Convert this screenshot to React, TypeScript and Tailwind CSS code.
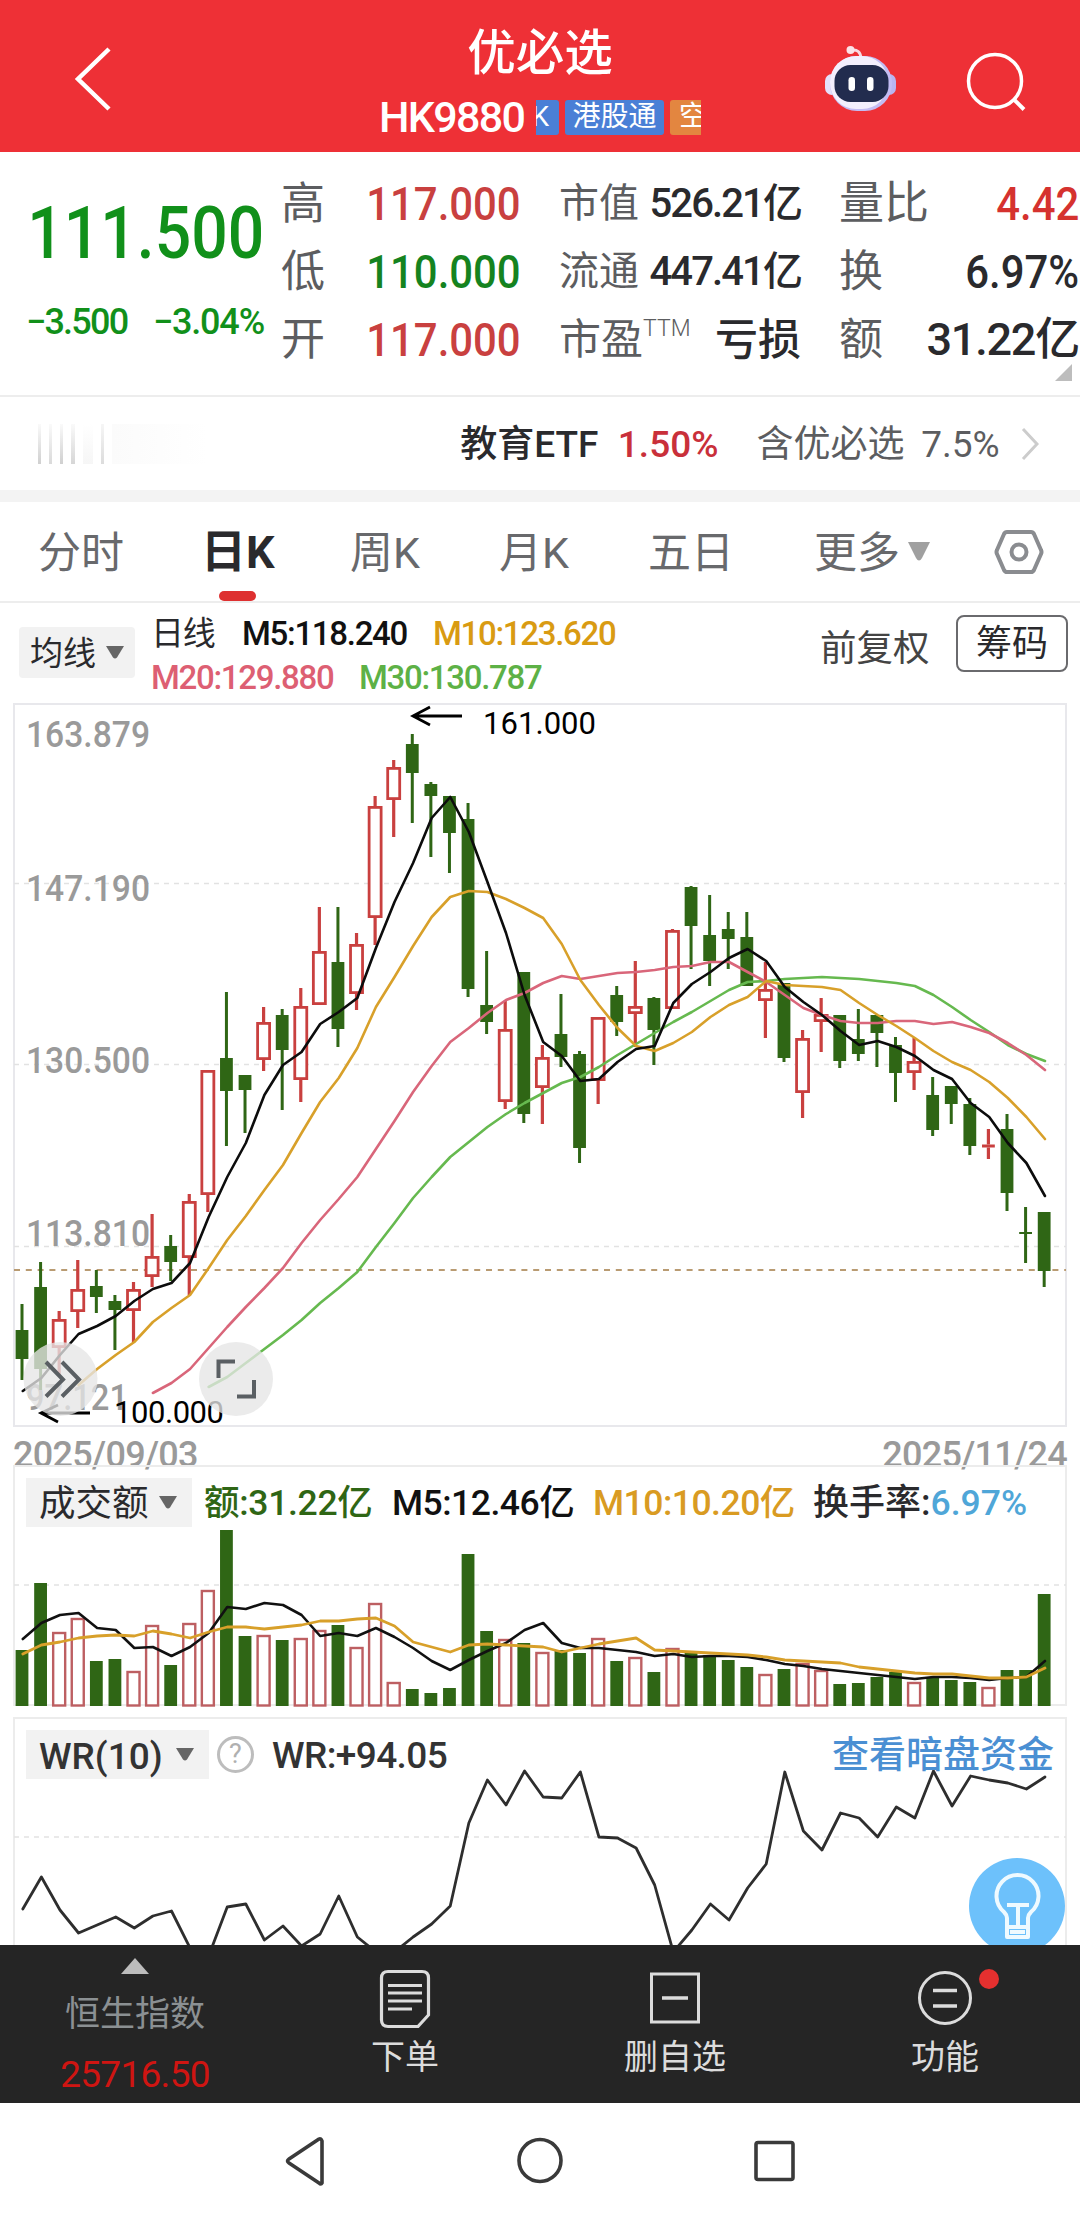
import type { ReactNode } from "react";

type Candle = {
  up: boolean;
  high: number;
  top: number;
  bottom: number;
  low: number;
};

const UP = "#c9403f";
const DOWN = "#2f6615";

const STEP = 18.585;
const FIRST_X = 22;
const xAt = (index: number) => FIRST_X + index * STEP;

// [up, high, body top, body bottom, low]
const candles: Candle[] = (
  [
    [0, 1304, 1330, 1359, 1380],
    [0, 1262, 1287, 1369, 1390],
    [1, 1311, 1319, 1348, 1375],
    [1, 1260, 1289, 1312, 1328],
    [0, 1270, 1286, 1297, 1313],
    [0, 1295, 1301, 1310, 1350],
    [1, 1282, 1289, 1311, 1342],
    [1, 1214, 1256, 1277, 1287],
    [0, 1235, 1246, 1262, 1281],
    [1, 1194, 1201, 1258, 1295],
    [1, 1070, 1070, 1195, 1212],
    [0, 992, 1058, 1091, 1146],
    [0, 1075, 1075, 1090, 1133],
    [1, 1007, 1022, 1060, 1071],
    [0, 1009, 1015, 1050, 1110],
    [1, 988, 1006, 1080, 1102],
    [1, 907, 951, 1005, 1005],
    [0, 907, 962, 1029, 1047],
    [1, 933, 944, 994, 1010],
    [1, 796, 806, 918, 945],
    [1, 760, 767, 800, 837],
    [0, 734, 744, 773, 823],
    [0, 782, 784, 796, 857],
    [0, 796, 796, 833, 873],
    [0, 803, 819, 989, 997],
    [0, 951, 1005, 1022, 1034],
    [1, 1001, 1029, 1102, 1109],
    [0, 972, 972, 1114, 1123],
    [1, 1045, 1057, 1088, 1124],
    [0, 994, 1034, 1057, 1067],
    [0, 1051, 1054, 1148, 1163],
    [1, 1017, 1017, 1081, 1104],
    [0, 986, 995, 1022, 1036],
    [1, 961, 1006, 1014, 1047],
    [0, 997, 998, 1030, 1065],
    [1, 929, 930, 1009, 1009],
    [0, 886, 887, 926, 969],
    [0, 895, 935, 961, 986],
    [0, 912, 929, 939, 969],
    [0, 912, 937, 986, 986],
    [1, 962, 989, 1001, 1038],
    [0, 983, 983, 1058, 1062],
    [1, 1030, 1038, 1093, 1118],
    [1, 998, 1014, 1022, 1052],
    [0, 1015, 1015, 1061, 1068],
    [0, 1009, 1039, 1054, 1061],
    [0, 1015, 1015, 1033, 1067],
    [0, 1037, 1045, 1073, 1102],
    [1, 1038, 1061, 1073, 1090],
    [0, 1077, 1095, 1130, 1136],
    [0, 1086, 1086, 1104, 1124],
    [0, 1098, 1104, 1146, 1155],
    [1, 1129, 1144.5, 1147.5, 1159],
    [0, 1114, 1129, 1193, 1211],
    [0, 1207, 1232, 1234, 1263],
    [0, 1212, 1212, 1271, 1287],
  ] as number[][]
).map(([up, high, top, bottom, low]) => ({
  up: up === 1,
  high,
  top,
  bottom,
  low,
}));

const ma5 = [
  1391, 1378, 1355, 1334, 1326, 1316, 1301, 1289, 1283, 1263, 1217, 1177, 1143,
  1095, 1065, 1052, 1024, 1012, 998, 948, 902, 863, 818, 797, 832, 882, 933,
  995, 1042, 1056, 1081, 1079, 1062, 1049, 1046, 1003, 984, 972, 958, 949, 961,
  987, 1002, 1015, 1031, 1045, 1041, 1047, 1056, 1070, 1079, 1103, 1117, 1143,
  1163, 1196,
];

const ma10 = [
  1385, 1369, 1355, 1342, 1322, 1308, 1295, 1268, 1240, 1216, 1190, 1165, 1133,
  1102, 1078, 1048, 1007, 977, 946, 917, 897, 891, 892, 899, 908, 918, 944, 980,
  1005, 1028, 1046, 1051, 1043, 1032, 1017, 1005, 997, 981, 985, 986, 987, 990,
  1003, 1015, 1026, 1038, 1051, 1062, 1070, 1082, 1098, 1117, 1139,
];

const ma20 = [
  1393, 1383, 1369, 1348, 1327, 1307, 1288, 1268, 1243, 1220, 1199, 1177, 1149,
  1121, 1092, 1066, 1042, 1028, 1013, 1000, 993, 983, 976, 979, 976, 973, 972,
  970, 967, 966, 962, 962, 972, 982, 995, 1008, 1015, 1021, 1023, 1023, 1021,
  1021, 1024, 1022, 1027, 1033, 1043, 1055, 1070,
];

const ma30 = [
  1387, 1377, 1363, 1349, 1335, 1320, 1303, 1288, 1272, 1247, 1223, 1198, 1177,
  1157, 1142, 1127, 1114, 1103, 1093, 1083, 1077, 1067, 1055, 1044, 1033, 1022,
  1012, 1001, 990, 982, 981, 979, 978, 977, 978, 979, 981, 983, 986, 995, 1007,
  1020, 1032, 1045, 1054, 1061,
];

const volumes = [
  1650, 1583, 1632, 1618, 1661, 1659, 1671, 1625, 1665, 1623, 1590, 1530, 1636,
  1635, 1640, 1638, 1630, 1625, 1647, 1603, 1682, 1689, 1693, 1688, 1554, 1631,
  1639, 1643, 1652, 1650, 1653, 1638, 1661, 1657, 1672, 1648, 1652, 1655, 1660,
  1667, 1674, 1669, 1663, 1670, 1684, 1683, 1677, 1672, 1682, 1677, 1680, 1682,
  1687, 1670, 1670, 1594,
];

const volMa5 = [
  1639, 1623, 1615, 1613, 1628, 1630, 1648, 1647, 1656, 1647, 1633, 1607, 1609,
  1603, 1605, 1615, 1636, 1633, 1636, 1628, 1637, 1648, 1661, 1670, 1660, 1651,
  1643, 1630, 1623, 1643, 1648, 1648, 1650, 1652, 1656, 1654, 1657, 1656, 1656,
  1657, 1660, 1664, 1666, 1669, 1671, 1673, 1675, 1677, 1679, 1677, 1677, 1678,
  1680, 1678, 1677, 1661,
];

const volMa10 = [
  1654, 1645, 1642, 1638, 1636, 1635, 1636, 1631, 1634, 1638, 1632, 1627, 1627,
  1629, 1627, 1625, 1621, 1621, 1619, 1618, 1626, 1642, 1647, 1652, 1645, 1644,
  1645, 1646, 1647, 1652, 1648, 1644, 1641, 1638, 1650, 1651, 1652, 1653, 1654,
  1655, 1657, 1660, 1661, 1662, 1663, 1667, 1669, 1671, 1673, 1674, 1674, 1676,
  1678, 1678, 1677, 1668,
];

const wr = [
  1909, 1877, 1910, 1933, 1925, 1917, 1928, 1916, 1911, 1948, 1956, 1907, 1904,
  1940, 1926, 1946, 1934, 1896, 1937, 1952, 1952, 1937, 1924, 1906, 1823, 1780,
  1805, 1771, 1797, 1798, 1772, 1837, 1838, 1848, 1885, 1952, 1930, 1904, 1920,
  1888, 1864, 1772, 1831, 1850, 1813, 1818, 1837, 1807, 1818, 1771, 1806, 1776,
  1780, 1783, 1789, 1777,
];

function Line({
  data,
  start = 0,
  color,
  width = 2.6,
}: {
  data: number[];
  start?: number;
  color: string;
  width?: number;
}) {
  return (
    <polyline
      points={data.map((y, i) => `${xAt(i + start) + 0.8},${y}`).join(" ")}
      fill="none"
      stroke={color}
      strokeWidth={width}
      strokeLinejoin="round"
      strokeLinecap="round"
    />
  );
}

function GridLine({ y }: { y: number }) {
  return (
    <line
      x1={14}
      x2={1066}
      y1={y}
      y2={y}
      stroke="#e2e2e2"
      strokeWidth={1.5}
      strokeDasharray="5 5"
    />
  );
}

function Caret({ className = "" }: { className?: string }) {
  return (
    <svg viewBox="0 0 18 13" className={`h-[13px] w-[18px] ${className}`}>
      <path d="M0 0h18l-7 11.5q-2 2-4 0z" fill="currentColor" />
    </svg>
  );
}

function Header() {
  return (
    <header className="flex h-[152px] bg-[#ee3036] text-white">
      <div className="flex w-[200px] pt-[45px] pl-[72px]">
        <svg viewBox="0 0 40 68" className="h-[68px] w-10">
          <path
            d="M37 4L6 34l31 30"
            fill="none"
            stroke="#fff"
            strokeWidth="4.5"
          />
        </svg>
      </div>
      <div className="flex w-[680px] flex-col items-center pt-[23px]">
        <h1 className="text-[48.5px] leading-[62px] font-medium">优必选</h1>
        <div className="mt-[7px] flex h-[50px] w-[322px] items-center">
          <span className="w-[157px] text-[43px] leading-[50px] font-medium tracking-[-1.7px]">
            HK9880
          </span>
          <div className="flex h-[35px] flex-1 gap-[6px] overflow-hidden text-[28px] leading-[34px]">
            <span className="flex w-[23px] shrink-0 justify-end overflow-hidden rounded-r-[3px] bg-[#4a7fd6] pr-[10px]">
              K
            </span>
            <span className="w-[99px] shrink-0 rounded-[3px] bg-[#4a7fd6] text-center">
              港股通
            </span>
            <span className="w-[50px] shrink-0 rounded-[3px] bg-[#e38640] pl-[9px]">
              空
            </span>
          </div>
        </div>
      </div>
      <div className="flex w-[200px] pt-[42px]">
        <RobotIcon />
        <svg viewBox="0 0 64 64" className="mt-[7px] ml-[3px] h-16 w-16">
          <circle
            cx="30"
            cy="32"
            r="26.500"
            fill="none"
            stroke="#fff"
            strokeWidth="3.5"
          />
          <path d="M48.500 50l10.500 10.500" stroke="#fff" strokeWidth="4" />
        </svg>
      </div>
    </header>
  );
}

function RobotIcon() {
  return (
    <svg viewBox="0 0 76 74" className="-ml-[58px] mr-[64px] h-[74px] w-[76px]">
      <path
        d="M30 8q8-1 9 8"
        fill="none"
        stroke="#f9d9e2"
        strokeWidth="3"
      />
      <circle cx="28.500" cy="8" r="4" fill="#fbe3e8" />
      <rect x="3" y="32" width="14" height="21" rx="7" fill="#e4e0fb" />
      <rect x="60" y="32" width="14" height="21" rx="7" fill="#b9b4f0" />
      <rect x="8" y="14" width="62" height="55" rx="27" fill="#c3bcf3" />
      <rect x="8" y="14" width="58" height="53" rx="26" fill="#f3effd" />
      <rect x="12.500" y="23" width="54" height="37" rx="16" fill="#222c4e" />
      <rect x="26.500" y="35" width="6.500" height="14" rx="3.200" fill="#fff" />
      <rect x="45" y="35" width="6.500" height="14" rx="3.200" fill="#fff" />
    </svg>
  );
}

function Stat({ label, children }: { label: ReactNode; children: ReactNode }) {
  return (
    <div className="flex h-[68px] items-center justify-between whitespace-nowrap">
      <span className="text-[#5c5d60]">{label}</span>
      {children}
    </div>
  );
}

function Price({ className, children }: { className: string; children: string }) {
  return (
    <span
      className={`origin-right scale-x-[.91] text-[46px] font-medium ${className}`}
    >
      {children}
    </span>
  );
}

function Quote() {
  return (
    <section className="relative flex h-[245px] border-b-2 border-[#ededed] text-[44px] leading-[60px]">
      <div className="w-[281px] pt-[31px] text-[#11901a]">
        <div className="flex h-[100px] origin-left scale-x-[.88] items-center pl-[31px] text-[73px] font-medium">
          111.500
        </div>
        <div className="flex h-[78px] items-center pl-[26px] text-[36px] font-medium tracking-[-1.8px]">
          <span className="w-[127px]">−3.500</span>
          <span className="tracking-[-1.2px]">−3.04%</span>
        </div>
      </div>
      <div className="w-[240px] pt-[18px]">
        <Stat label="高">
          <Price className="text-[#c9403f]">117.000</Price>
        </Stat>
        <Stat label="低">
          <Price className="text-[#15831f]">110.000</Price>
        </Stat>
        <Stat label="开">
          <Price className="text-[#c9403f]">117.000</Price>
        </Stat>
      </div>
      <div className="ml-[38px] w-[242px] pt-[18px] text-[40px] text-[#2a2a2d]">
        <Stat label="市值">
          <span className="font-medium tracking-[-1.9px]">526.21亿</span>
        </Stat>
        <Stat label="流通">
          <span className="font-medium tracking-[-1.9px]">447.41亿</span>
        </Stat>
        <Stat
          label={
            <span className="flex text-[42px]">
              市盈
              <span className="-mt-[11px] text-[23px] font-light">TTM</span>
            </span>
          }
        >
          <span className="text-[43px] font-medium">亏损</span>
        </Stat>
      </div>
      <div className="ml-[38px] w-[240px] pt-[18px] text-[#2a2a2d]">
        <Stat label={<span className="text-[45px]">量比</span>}>
          <Price className="text-[#d5322f]">4.42</Price>
        </Stat>
        <Stat label="换">
          <Price className="">6.97%</Price>
        </Stat>
        <Stat label="额">
          <span className="text-[45px] font-medium tracking-[-1.2px]">
            31.22亿
          </span>
        </Stat>
      </div>
      <svg
        viewBox="0 0 17 17"
        className="absolute right-2 bottom-[14px] h-[17px] w-[17px]"
      >
        <path d="M17 0v17H0z" fill="#bdbdbd" />
      </svg>
    </section>
  );
}

function EtfRow() {
  return (
    <section className="flex h-[105px] items-center border-b-[12px] border-[#f3f3f3] pr-10 pl-[38px] text-[37px] leading-[50px] whitespace-nowrap">
      <div className="flex h-10 w-[423px] gap-[8px]">
        <i className="w-[3px] bg-gradient-to-b from-[#fafafa] to-[#d0d0d0]" />
        <i className="w-[3px] bg-gradient-to-b from-[#fafafa] to-[#dadada]" />
        <i className="w-[3px] bg-gradient-to-b from-[#fafafa] to-[#d0d0d0]" />
        <i className="w-[4px] bg-gradient-to-b from-[#fafafa] to-[#d6d6d6]" />
        <i className="w-[10px] bg-gradient-to-b from-white to-[#f6f6f6]" />
        <i className="w-[3px] bg-gradient-to-b from-[#f6f6f6] to-[#dcdcdc]" />
        <i className="w-[96px] bg-gradient-to-r from-[#fbfbfb] to-white" />
      </div>
      <span className="w-[158px] pt-[2px] font-medium text-[#2a2a2d]">
        教育ETF
      </span>
      <span className="w-[139px] pt-[2px] font-medium text-[#c9303a]">
        1.50%
      </span>
      <span className="w-[165px] pt-[2px] text-[#5c5d60]">含优必选</span>
      <span className="w-[99px] pt-[2px] text-[#5c5d60]">7.5%</span>
      <svg viewBox="0 0 20 34" className="h-[34px] w-5">
        <path d="M3 2l14 15L3 32" fill="none" stroke="#ccc" strokeWidth="3" />
      </svg>
    </section>
  );
}

function Tabs() {
  return (
    <nav className="relative flex h-[101px] items-center border-b-2 border-[#ededed] pl-[38px] text-[43px] leading-[60px] whitespace-nowrap text-[#68696c]">
      <span className="w-[163px] pt-[2px]">分时</span>
      <span className="w-[149px] pt-[2px] text-[45px] font-bold text-[#2a2a2d]">
        日K
      </span>
      <span className="w-[149px] pt-[2px]">周K</span>
      <span className="w-[149px] pt-[2px]">月K</span>
      <span className="w-[166px] pt-[2px]">五日</span>
      <span className="w-[94px] pt-[2px]">更多</span>
      <svg viewBox="0 0 22 19" className="h-[19px] w-[22px]">
        <path d="M0 0h22l-8 16q-3 5-6 0z" fill="#a0a0a0" />
      </svg>
      <svg viewBox="0 0 50 46" className="ml-[64px] h-[46px] w-[50px]">
        <path
          d="M13 3h24q2 0 3 2l7 16q1 2 0 4l-7 16q-1 2-3 2H13q-2 0-3-2L3 25q-1-2 0-4l7-16q1-2 3-2z"
          fill="none"
          stroke="#8a8c90"
          strokeWidth="4"
        />
        <circle
          cx="25"
          cy="23"
          r="7.5"
          fill="none"
          stroke="#8a8c90"
          strokeWidth="4"
        />
      </svg>
      <i className="absolute bottom-0 left-[219px] h-[10px] w-[37px] rounded-[5px] bg-[#de3030]" />
    </nav>
  );
}

function MaLegend() {
  return (
    <section className="flex h-[100px] pl-[19px] text-[33px] leading-[44px] whitespace-nowrap">
      <div className="mt-6 flex h-[51px] w-[116px] items-center rounded bg-[#f2f2f2] pl-[11px] text-[#2a2a2d]">
        <span className="w-[76px] pt-[2px]">均线</span>
        <Caret className="text-[#666]" />
      </div>
      <div className="ml-[16px] w-[669px] pt-[9px] font-medium tracking-[-1.3px]">
        <div className="flex text-[#111]">
          <span className="w-[91px] font-normal text-[#2a2a2d]">日线</span>
          <span className="w-[191px]">M5:118.240</span>
          <span className="text-[#d99b12]">M10:123.620</span>
        </div>
        <div className="flex">
          <span className="w-[208px] text-[#dd5f73]">M20:129.880</span>
          <span className="text-[#5db146]">M30:130.787</span>
        </div>
      </div>
      <div className="flex h-[92px] w-[136px] items-center text-[36.5px] text-[#444]">
        前复权
      </div>
      <div className="mt-3 h-[57px] w-[112px] rounded-lg border-2 border-[#6a6a6d] text-center text-[36px] leading-[55px] text-[#2a2a2d]">
        筹码
      </div>
    </section>
  );
}

const priceLabels = [
  { text: "163.879", y: 747 },
  { text: "147.190", y: 901 },
  { text: "130.500", y: 1073 },
  { text: "113.810", y: 1246 },
  { text: "97.121", y: 1410 },
];

function PriceChart() {
  return (
    <svg
      viewBox="0 703 1080 724"
      className="block h-[724px] w-[1080px] font-['Roboto',sans-serif]"
    >
      <rect
        x={14}
        y={704}
        width={1052}
        height={722}
        fill="none"
        stroke="#e8e8ec"
        strokeWidth={2}
      />
      <GridLine y={883.5} />
      <GridLine y={1064.5} />
      <GridLine y={1246.5} />
      {priceLabels.map((label) => (
        <text
          key={label.text}
          x={26}
          y={label.y}
          fontSize={36}
          fontWeight={500}
          fill="#9a9a9a"
          textLength={label.text.length === 7 ? 124 : 102}
          lengthAdjust="spacingAndGlyphs"
        >
          {label.text}
        </text>
      ))}
      <line
        x1={14}
        x2={1066}
        y1={1270}
        y2={1270}
        stroke="#b99b72"
        strokeWidth={1.8}
        strokeDasharray="6 5.8"
      />
      {candles.map((c, i) => {
        const color = c.up ? UP : DOWN;
        const wick = c.up ? 3.2 : 3;
        return (
          <g key={i} stroke={color} strokeWidth={wick}>
            <path
              d={`M${xAt(i)} ${c.high}V${c.top}M${xAt(i)} ${c.bottom}V${c.low}`}
            />
            {c.up && c.bottom - c.top > 4 ? (
              <rect
                x={xAt(i) - 6}
                y={c.top + 1.4}
                width={12}
                height={c.bottom - c.top - 2.8}
                fill="#fff"
                strokeWidth={2.8}
              />
            ) : (
              <rect
                x={xAt(i) - 6.4}
                y={c.top}
                width={12.8}
                height={c.bottom - c.top}
                fill={color}
                stroke="none"
              />
            )}
          </g>
        );
      })}
      <Line data={ma30} start={10} color="#66b94f" />
      <Line data={ma20} start={7} color="#d9667a" />
      <Line data={ma10} start={3} color="#d8a02a" />
      <Line data={ma5} color="#0c0c0c" />

      <g fill="none" stroke="#000" strokeWidth={2.8}>
        <path d="M462 716H413M430 707l-17 9 17 9" />
        <path d="M90 1413H42M58 1405l-17 8 17 9" />
      </g>
      <text x={483} y={734} fontSize={31} fill="#000" textLength={113}>
        161.000
      </text>
      <text x={114} y={1422.5} fontSize={31} fill="#000" textLength={110}>
        100.000
      </text>

      <g fill="#e6e6e6" fillOpacity={0.78}>
        <circle cx={60.5} cy={1379} r={37} />
        <circle cx={236} cy={1379} r={37} />
      </g>
      <g fill="none" stroke="#5a5f63" strokeWidth={4}>
        <path d="M46 1362l17 17.5-17 17M62 1362l17 17.5-17 17" />
        <path d="M218.5 1378v-16.5H235M254 1380v16.5H237" />
      </g>
    </svg>
  );
}

function VolumePanel() {
  return (
    <section className="relative h-[252px]">
      <svg viewBox="0 1465 1080 252" className="block h-[252px] w-[1080px]">
        <rect
          x={14}
          y={1466}
          width={1052}
          height={239}
          fill="none"
          stroke="#ececec"
          strokeWidth={2}
        />
        <GridLine y={1585} />
        {volumes.map((top, i) =>
          candles[i].up ? (
            <rect
              key={i}
              x={xAt(i) - 6}
              y={top + 1}
              width={12}
              height={1704.5 - top}
              fill="#fff"
              stroke="#bd5f62"
              strokeWidth={2.4}
            />
          ) : (
            <rect
              key={i}
              x={xAt(i) - 6.4}
              y={top}
              width={12.8}
              height={1706 - top}
              fill={DOWN}
            />
          ),
        )}
        <Line data={volMa5} color="#111" />
        <Line data={volMa10} color="#d8a02a" width={2.8} />
      </svg>
      <div className="absolute top-[13px] left-[26px] flex h-[49px] items-center text-[35.5px] leading-[49px] font-medium whitespace-nowrap text-[#111]">
        <span className="flex h-[49px] w-[166px] items-center bg-[#f2f2f2] pl-[13px] text-[36.5px] font-normal text-[#2a2a2d]">
          <span className="w-[120px] pt-[2px]">成交额</span>
          <Caret className="text-[#666]" />
        </span>
        <span className="ml-[12px] w-[188px] pt-[2px] tracking-[-0.3px] text-[#2f6615]">
          额:31.22亿
        </span>
        <span className="w-[201px] pt-[2px] tracking-[-0.5px]">M5:12.46亿</span>
        <span className="w-[220px] pt-[2px] tracking-[-0.5px] text-[#d99b22]">
          M10:10.20亿
        </span>
        <span className="pt-[2px] text-[36px] text-[#2a2a2d]">换手率:</span>
        <span className="pt-[2px] text-[#4fa6d8]">6.97%</span>
      </div>
    </section>
  );
}

function WrPanel() {
  return (
    <section className="relative h-[228px] overflow-hidden">
      <svg viewBox="0 1717 1080 228" className="block h-[228px] w-[1080px]">
        <path
          d="M14 1945V1718H1066V1945"
          fill="none"
          stroke="#ececec"
          strokeWidth={2}
        />
        <GridLine y={1837} />
        <Line data={wr} color="#2e2e2e" width={2.8} />
      </svg>
      <div className="absolute top-[13px] left-[26px] flex h-[49px] w-[1028px] items-center text-[37px] leading-[49px] whitespace-nowrap text-[#333]">
        <span className="flex h-[49px] w-[183px] items-center bg-[#f2f2f2] pl-[13px]">
          <span className="w-[137px] pt-[3px] font-medium">WR(10)</span>
          <Caret className="text-[#666]" />
        </span>
        <span className="ml-[8px] flex h-[37px] w-[37px] items-center justify-center rounded-full border-[3px] border-[#bdbdbd] text-[27px] text-[#b0b0b0]">
          ?
        </span>
        <span className="ml-[18px] pt-[2px] font-medium tracking-[-0.6px]">
          WR:+94.05
        </span>
        <span className="ml-auto pt-[2px] font-medium text-[#4a8fd3]">
          查看暗盘资金
        </span>
      </div>
      <svg
        viewBox="0 0 96 96"
        className="absolute top-[141px] left-[969px] h-24 w-24"
      >
        <circle cx="48" cy="48" r="48" fill="#6dc1fb" />
        <g fill="none" stroke="#effaff" strokeWidth="4" strokeLinejoin="round">
          <path d="M38 69v-9q0-3-3-6a21 21 0 1127 0q-3 3-3 6v9" />
          <path d="M38 47h22M49 47v21M38 69h21v10H38zM41 74h15" />
        </g>
      </svg>
    </section>
  );
}

function BottomBar() {
  return (
    <footer className="grid h-[158px] grid-cols-4 bg-[#252525] text-[34px] leading-[44px] text-[#dcdcdc]">
      <div className="flex flex-col items-center pt-[13px]">
        <svg viewBox="0 0 28 16" className="h-4 w-7">
          <path d="M14 0l14 16H0z" fill="#bcbcbc" />
        </svg>
        <span className="mt-[19px] text-[35px] text-[#8b9093]">恒生指数</span>
        <span className="mt-[16px] text-[37px] tracking-[-0.7px] text-[#cf1512]">
          25716.50
        </span>
      </div>
      <div className="flex flex-col items-center pt-[24px]">
        <svg viewBox="0 0 52 60" className="h-[60px] w-[52px]">
          <g fill="none" stroke="#dcdcdc" strokeWidth="3.2">
            <path d="M9 2.5h34q6.500 0 6.500 6.500v37L39 57.500H9q-6.500 0-6.500-6.500V9Q2.500 2.500 9 2.500z" />
            <path d="M9 16.500h34M9 24h34M9 32h34M9 40h24" />
          </g>
        </svg>
        <span className="mt-[6px]">下单</span>
      </div>
      <div className="flex flex-col items-center pt-[24px]">
        <svg viewBox="0 0 52 60" className="h-[60px] w-[52px]">
          <g fill="none" stroke="#dcdcdc" strokeWidth="3">
            <rect x="2.500" y="5" width="47" height="48" />
            <path d="M13 29h26" strokeWidth="3.500" />
          </g>
        </svg>
        <span className="mt-[6px]">删自选</span>
      </div>
      <div className="relative flex flex-col items-center pt-[24px]">
        <svg viewBox="0 0 56 60" className="h-[60px] w-14">
          <g fill="none" stroke="#dcdcdc" strokeWidth="3">
            <circle cx="28" cy="29" r="25.500" />
            <path d="M16 21.500h24M16 37h24" strokeWidth="3.500" />
          </g>
        </svg>
        <span className="mt-[6px]">功能</span>
        <i className="absolute top-[24px] left-[169px] h-5 w-5 rounded-full bg-[#e5302f]" />
      </div>
    </footer>
  );
}

function SystemNav() {
  return (
    <div className="flex h-[115px] bg-white">
      <svg viewBox="0 0 1080 115" className="h-[115px] w-[1080px]">
        <g
          fill="none"
          stroke="#3a3a3a"
          strokeWidth="3.600"
          strokeLinejoin="round"
        >
          <path d="M322 38v42q-1 2-3 0L289 60q-3-2 0-4l30-20q2-1 3 2z" />
          <circle cx="540" cy="57.500" r="21" />
          <rect x="756" y="39.500" width="37" height="37" rx="2" />
        </g>
      </svg>
    </div>
  );
}

export default function App() {
  return (
    <div className="h-[2218px] w-[1080px] overflow-hidden bg-white font-['Roboto','Noto_Sans_CJK_SC',sans-serif]">
      <Header />
      <Quote />
      <EtfRow />
      <Tabs />
      <MaLegend />
      <PriceChart />
      <div className="flex h-[38px] justify-between pt-[6px] pr-[13px] pl-[13px] text-[36px] leading-[45px] font-medium tracking-[-0.7px] text-[#9a9a9a]">
        <span>2025/09/03</span>
        <span>2025/11/24</span>
      </div>
      <VolumePanel />
      <WrPanel />
      <BottomBar />
      <SystemNav />
    </div>
  );
}
